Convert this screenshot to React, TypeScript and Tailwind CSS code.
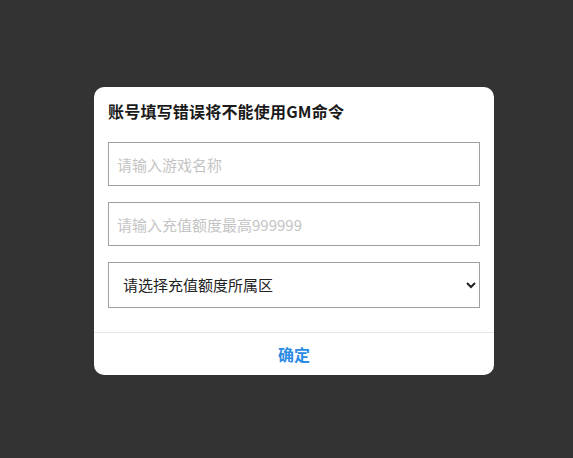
import React from 'react';

const font = "font-['Microsoft_YaHei','Noto_Sans_CJK_SC',sans-serif]";

export default function App() {
    return (
        <div className={`min-h-screen w-full bg-[#333333] pl-[94px] pt-[87px] ${font}`}>
            <div className="w-[400px] h-[288px] bg-white rounded-[10px] flex flex-col overflow-hidden">
                <div className="px-[14px] pt-[12px] flex-1">
                    <h3 className="text-[16px] leading-[24px] font-semibold text-[#1a1a1a] tracking-[0.2px]">
                        账号填写错误将不能使用GM命令
                    </h3>
                    <input
                        type="text"
                        placeholder="请输入游戏名称"
                        className="mt-[19px] block w-full h-[44px] border border-[#a0a0a0] px-[8px] text-[15px] text-[#333] placeholder:text-[#c4c4c4] outline-none"
                    />
                    <input
                        type="text"
                        placeholder="请输入充值额度最高999999"
                        className="mt-[16px] block w-full h-[44px] border border-[#a0a0a0] px-[8px] text-[15px] text-[#333] placeholder:text-[#c4c4c4] outline-none"
                    />
                    <select
                        defaultValue=""
                        className="mt-[16px] block w-full h-[46px] border border-[#a0a0a0] pl-[10px] pr-[4px] pb-[2px] text-[15px] text-[#222] bg-white outline-none"
                    >
                        <option value="" disabled>请选择充值额度所属区</option>
                        <option value="1">一区</option>
                        <option value="2">二区</option>
                    </select>
                </div>
                <div className="border-t border-[#e6e6e6] h-[43px] flex items-center justify-center">
                    <button className="text-[16px] font-semibold text-[#2b8ae4]">确定</button>
                </div>
            </div>
        </div>
    );
}
